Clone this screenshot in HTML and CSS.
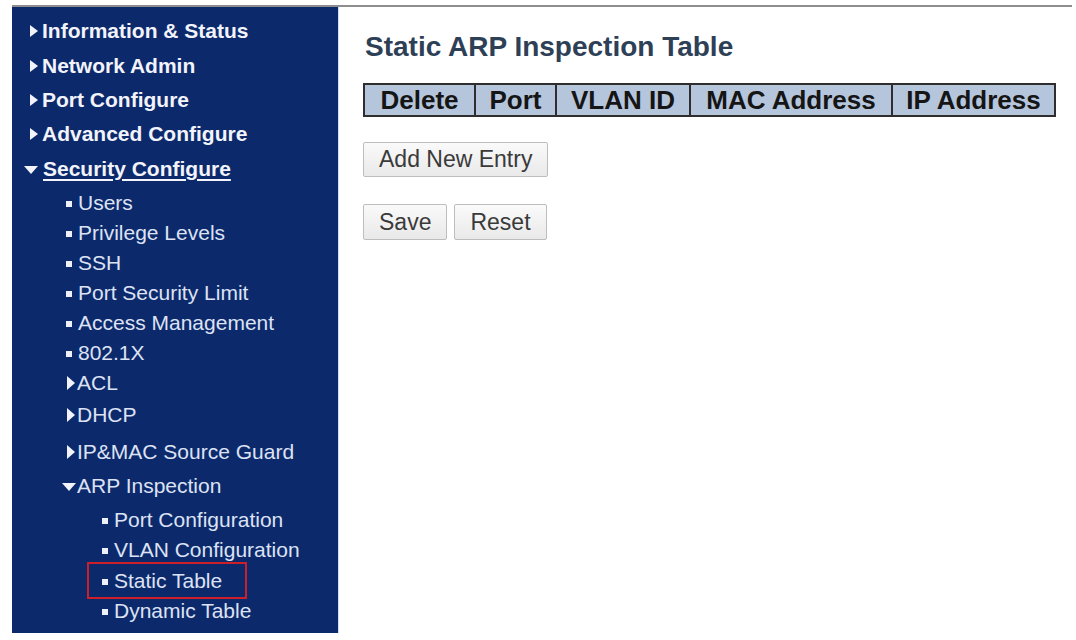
FILE: index.html
```html
<!DOCTYPE html>
<html>
<head>
<meta charset="utf-8">
<link rel="stylesheet" href="styles.css">
</head>
<body>
<div class="frame">
  <nav class="sidebar">
    <div class="top"><span class="tri-r"></span><span>Information &amp; Status</span></div>
    <div class="top"><span class="tri-r"></span><span>Network Admin</span></div>
    <div class="top"><span class="tri-r"></span><span>Port Configure</span></div>
    <div class="top"><span class="tri-r"></span><span>Advanced Configure</span></div>
    <div class="top open"><span class="tri-d"></span><span class="uline">Security Configure</span></div>
    <div class="sub-list">
      <div class="sub"><span class="sq"></span><span>Users</span></div>
      <div class="sub"><span class="sq"></span><span>Privilege Levels</span></div>
      <div class="sub"><span class="sq"></span><span>SSH</span></div>
      <div class="sub"><span class="sq"></span><span>Port Security Limit</span></div>
      <div class="sub"><span class="sq"></span><span>Access Management</span></div>
      <div class="sub"><span class="sq"></span><span>802.1X</span></div>
      <div class="sub folder"><span class="tri-r small"></span><span>ACL</span></div>
      <div class="sub folder gap2"><span class="tri-r small"></span><span>DHCP</span></div>
      <div class="sub folder gap7"><span class="tri-r small"></span><span>IP&amp;MAC Source Guard</span></div>
      <div class="sub folder-open gap4"><span class="tri-d small"></span><span>ARP Inspection</span></div>
      <div class="sub3-list">
        <div class="sub3"><span class="sq"></span><span>Port Configuration</span></div>
        <div class="sub3"><span class="sq"></span><span>VLAN Configuration</span></div>
        <div class="sub3 hl-row"><div class="hl"><span class="sq"></span><span>Static Table</span></div></div>
        <div class="sub3"><span class="sq"></span><span>Dynamic Table</span></div>
      </div>
    </div>
  </nav>
  <main class="content">
    <h1 class="title">Static ARP Inspection Table</h1>
    <table class="arp">
      <colgroup>
        <col class="c1"><col class="c2"><col class="c3"><col class="c4"><col class="c5">
      </colgroup>
      <thead>
        <tr><th>Delete</th><th>Port</th><th>VLAN ID</th><th>MAC Address</th><th>IP Address</th></tr>
      </thead>
    </table>
    <div class="row add-row"><button class="btn">Add New Entry</button></div>
    <div class="row save-row"><button class="btn">Save</button><button class="btn">Reset</button></div>
  </main>
</div>
</body>
</html>
```
FILE: styles.css
```css
html, body {
  margin: 0;
  padding: 0;
  background: #ffffff;
}
body {
  font-family: "Liberation Sans", Arial, sans-serif;
}
.frame {
  margin: 5px 0 0 12px;
  width: 1060px;
  border-top: 2px solid #8e8e8e;
  display: flex;
  align-items: stretch;
}
.sidebar {
  width: 326px;
  height: 626px;
  box-sizing: border-box;
  background: #0c2a6b;
  padding-top: 7px;
  flex: none;
}
.top {
  height: 34.4px;
  display: flex;
  align-items: center;
  padding-left: 18px;
  gap: 4px;
  color: #f2f3fb;
  font-weight: bold;
  font-size: 21px;
  white-space: nowrap;
}
.top.open {
  padding-left: 12px;
  gap: 5px;
}
.uline {
  text-decoration: underline;
  text-underline-offset: 3px;
  text-decoration-thickness: 1.5px;
}
.tri-r {
  width: 0;
  height: 0;
  border-left: 8px solid #f2f3fb;
  border-top: 6px solid transparent;
  border-bottom: 6px solid transparent;
  flex: none;
}
.tri-r.small {
  border-left-width: 8px;
  border-top-width: 7px;
  border-bottom-width: 7px;
}
.tri-d {
  width: 0;
  height: 0;
  border-top: 8px solid #f2f3fb;
  border-left: 7px solid transparent;
  border-right: 7px solid transparent;
  flex: none;
  margin-top: 2px;
}
.sub-list {
  margin-top: 2px;
}
.sub, .sub3 {
  height: 30px;
  display: flex;
  align-items: center;
  color: #dde2f5;
  font-size: 21px;
  white-space: nowrap;
}
.sub {
  padding-left: 54px;
  gap: 6px;
}
.sub.folder {
  padding-left: 55px;
  gap: 2px;
}
.sub.folder-open {
  padding-left: 50px;
  gap: 1px;
}
.gap2 { margin-top: 2px; }
.gap7 { margin-top: 7px; }
.gap4 { margin-top: 4px; }
.sub3-list {
  margin-top: 4px;
}
.sub3 {
  padding-left: 90px;
  gap: 6px;
}
.sq {
  width: 6px;
  height: 6px;
  background: #eef0fa;
  flex: none;
  margin-top: 3px;
}
.sub3.hl-row {
  padding-left: 75px;
  margin-top: 1px;
}
.hl {
  box-sizing: border-box;
  width: 160px;
  height: 37px;
  margin: -3.5px 0;
  border: 2px solid #cc1f2a;
  display: flex;
  align-items: center;
  gap: 6px;
  padding-left: 13px;
}
.content {
  flex: 1;
  height: 626px;
  border-left: 1px solid #d3dcee;
  padding-left: 24px;
  box-sizing: border-box;
}
.title {
  margin: 23px 0 0 2px;
  font-size: 28px;
  line-height: 34px;
  font-weight: bold;
  color: #2e4056;
}
.arp {
  margin-top: 19px;
  width: 691px;
  table-layout: fixed;
  border-collapse: collapse;
  border: 2px solid #2e2e2e;
}
.c1 { width: 111px; }
.c2 { width: 81px; }
.c3 { width: 134px; }
.c4 { width: 202px; }
.c5 { width: 163px; }
.arp th {
  background: #b5c6dc;
  border: 2px solid #2e2e2e;
  height: 30px;
  padding: 0;
  line-height: 28px;
  font-size: 26px;
  font-weight: bold;
  color: #151515;
  text-align: center;
  white-space: nowrap;
}
.row {
  display: flex;
  gap: 7px;
}
.add-row {
  margin-top: 25px;
}
.save-row {
  margin-top: 27px;
}
.btn {
  font-family: "Liberation Sans", Arial, sans-serif;
  font-size: 23px;
  color: #3a3a3a;
  height: 35px;
  padding: 0 15px;
  background: linear-gradient(#fafafa, #e9e9e9);
  border: 1px solid #bdbdbd;
  border-radius: 2px;
  margin: 0;
}
.save-row .btn {
  height: 36px;
}
```
